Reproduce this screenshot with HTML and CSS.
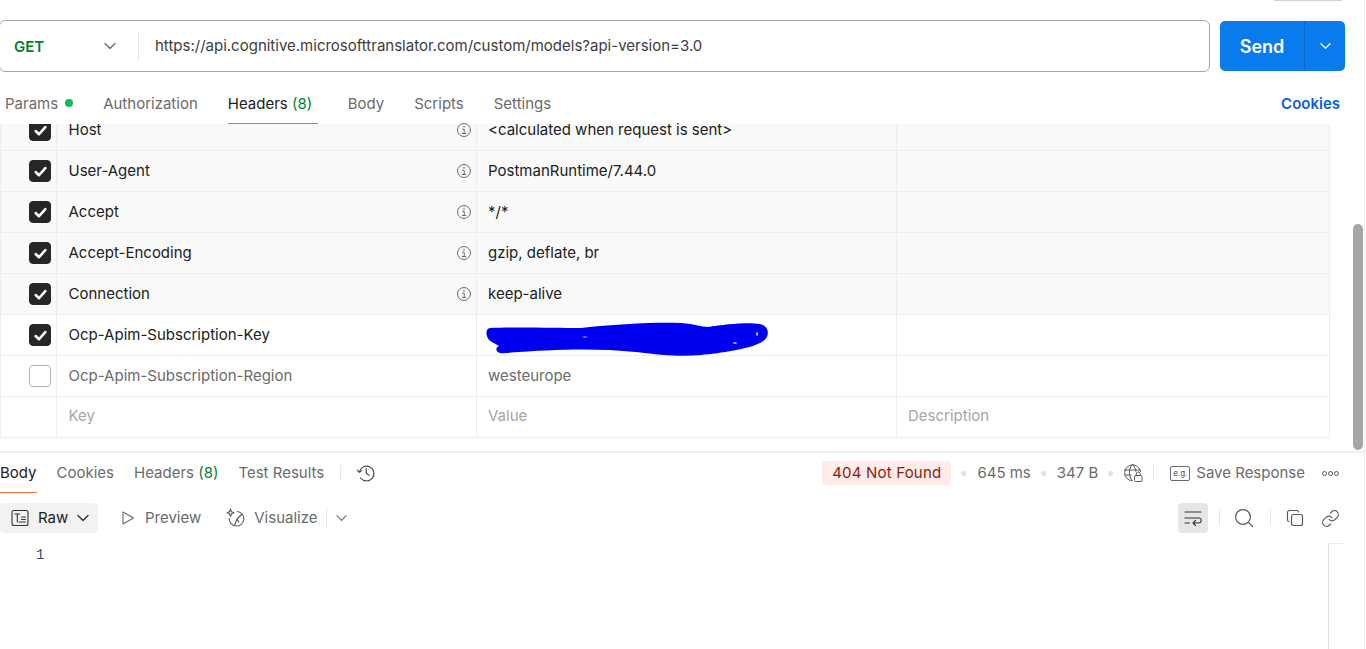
FILE: index.html
```html
<!DOCTYPE html>
<html lang="en">
<head>
<meta charset="utf-8">
<title>Postman request</title>
<link rel="stylesheet" href="styles.css">
</head>
<body>
<div class="page">
  <div class="top-strip"><span class="strip-tab"></span></div>
  <div class="url-row">
    <div class="url-box">
      <div class="method"><span class="method-name">GET</span>
        <svg class="chev-m" viewBox="0 0 12 8"><path d="M1 1.5 6 6.5 11 1.5"/></svg>
      </div>
      <div class="url-text">https://api.cognitive.microsofttranslator.com/custom/models?api-version=3.0</div>
    </div>
    <div class="send">
      <span class="send-main">Send</span>
      <span class="send-drop"><svg class="chev-w" viewBox="0 0 12 8"><path d="M1 1.5 6 6.5 11 1.5"/></svg></span>
    </div>
  </div>
  <div class="req-tabs">
    <div class="tab-list">
      <span class="tab">Params<i class="green-dot"></i></span>
      <span class="tab">Authorization</span>
      <span class="tab tab-on">Headers <b class="count">(8)</b></span>
      <span class="tab">Body</span>
      <span class="tab">Scripts</span>
      <span class="tab">Settings</span>
    </div>
    <span class="cookies">Cookies</span>
  </div>
  <div class="table-area">
    <div class="table">
      <div class="row auto first">
        <div class="c-check"><span class="box on"><svg viewBox="0 0 14 14"><path d="M2.5 7.5 5.6 10.5 11.5 3.8"/></svg></span></div>
        <div class="c-key">Host<svg class="info" viewBox="0 0 16 16"><circle cx="8" cy="8" r="6.5"/><path d="M6.6 7.2H8.2V11.5M6.4 11.5H9.8M8 4.2V5.4"/></svg></div>
        <div class="c-val">&lt;calculated when request is sent&gt;</div>
        <div class="c-desc"></div>
      </div>
      <div class="row auto">
        <div class="c-check"><span class="box on"><svg viewBox="0 0 14 14"><path d="M2.5 7.5 5.6 10.5 11.5 3.8"/></svg></span></div>
        <div class="c-key">User-Agent<svg class="info" viewBox="0 0 16 16"><circle cx="8" cy="8" r="6.5"/><path d="M6.6 7.2H8.2V11.5M6.4 11.5H9.8M8 4.2V5.4"/></svg></div>
        <div class="c-val">PostmanRuntime/7.44.0</div>
        <div class="c-desc"></div>
      </div>
      <div class="row auto">
        <div class="c-check"><span class="box on"><svg viewBox="0 0 14 14"><path d="M2.5 7.5 5.6 10.5 11.5 3.8"/></svg></span></div>
        <div class="c-key">Accept<svg class="info" viewBox="0 0 16 16"><circle cx="8" cy="8" r="6.5"/><path d="M6.6 7.2H8.2V11.5M6.4 11.5H9.8M8 4.2V5.4"/></svg></div>
        <div class="c-val">*/*</div>
        <div class="c-desc"></div>
      </div>
      <div class="row auto">
        <div class="c-check"><span class="box on"><svg viewBox="0 0 14 14"><path d="M2.5 7.5 5.6 10.5 11.5 3.8"/></svg></span></div>
        <div class="c-key">Accept-Encoding<svg class="info" viewBox="0 0 16 16"><circle cx="8" cy="8" r="6.5"/><path d="M6.6 7.2H8.2V11.5M6.4 11.5H9.8M8 4.2V5.4"/></svg></div>
        <div class="c-val">gzip, deflate, br</div>
        <div class="c-desc"></div>
      </div>
      <div class="row auto">
        <div class="c-check"><span class="box on"><svg viewBox="0 0 14 14"><path d="M2.5 7.5 5.6 10.5 11.5 3.8"/></svg></span></div>
        <div class="c-key">Connection<svg class="info" viewBox="0 0 16 16"><circle cx="8" cy="8" r="6.5"/><path d="M6.6 7.2H8.2V11.5M6.4 11.5H9.8M8 4.2V5.4"/></svg></div>
        <div class="c-val">keep-alive</div>
        <div class="c-desc"></div>
      </div>
      <div class="row">
        <div class="c-check"><span class="box on"><svg viewBox="0 0 14 14"><path d="M2.5 7.5 5.6 10.5 11.5 3.8"/></svg></span></div>
        <div class="c-key">Ocp-Apim-Subscription-Key</div>
        <div class="c-val">
          <svg class="scribble" viewBox="0 0 284 36"><path class="ink" d="M4 6C30 5 70 6 95 6C130 2 170 0 195 1C210 2 215 5 222 5C240 2 262 0 274 2C284 4 285 16 274 21C262 27 235 31 215 33C195 35 175 33 150 30C110 26 70 27 20 31C10 33 8 26 13 24L6 20C-1 17-1 6 4 6Z"/><ellipse class="hole" cx="271" cy="12" rx="0.8" ry="2"/><ellipse class="hole" cx="249" cy="21" rx="2" ry="0.8"/><ellipse class="hole" cx="99" cy="15" rx="3" ry="0.4"/></svg>
        </div>
        <div class="c-desc"></div>
      </div>
      <div class="row off">
        <div class="c-check"><span class="box"></span></div>
        <div class="c-key">Ocp-Apim-Subscription-Region</div>
        <div class="c-val">westeurope</div>
        <div class="c-desc"></div>
      </div>
      <div class="row ghost">
        <div class="c-check"></div>
        <div class="c-key">Key</div>
        <div class="c-val">Value</div>
        <div class="c-desc">Description</div>
      </div>
    </div>
    <div class="scroll-track"><span class="scroll-thumb"></span></div>
  </div>
  <div class="resp-tabs">
    <div class="resp-left">
      <span class="rtab rtab-on">Body</span>
      <span class="rtab">Cookies</span>
      <span class="rtab">Headers <b class="count">(8)</b></span>
      <span class="rtab">Test Results</span>
      <i class="vsep"></i>
      <svg class="ico-history" viewBox="0 0 20 20"><path d="M3.4 8.6A7.4 7.4 0 1 1 4.6 15M1.4 7.2 3.3 9.4 5.6 7.6M10.3 5.6V10.4L13.2 12.2"/></svg>
    </div>
    <div class="resp-right">
      <span class="status">404 Not Found</span>
      <i class="dot"></i><span class="meta num">645 ms</span>
      <i class="dot"></i><span class="meta num">347 B</span>
      <i class="dot"></i>
      <svg class="ico-globe" viewBox="0 0 20 20"><path d="M9 17.8A8 8 0 1 1 17.6 8.600M1.600 7H17M1.600 12H8M9.200 1.600C5.400 6 5.400 13 9 17.600M9.800 1.600C11.600 3.600 12.600 6 12.900 8.400"/><rect x="11.500" y="12.500" width="7.500" height="6" rx="1"/><path d="M13.200 12.500V11A2 2 0 0 1 17.200 11V12.500"/></svg>
      <i class="vsep"></i>
      <span class="eg">e.g.</span>
      <span class="meta save">Save Response</span>
      <span class="dots"><i></i><i></i><i></i></span>
    </div>
  </div>
  <div class="resp-tools">
    <div class="tools-left">
      <span class="raw">
        <svg class="ico-raw" viewBox="0 0 18 18"><rect x="1" y="1.500" width="16" height="15" rx="2"/><path d="M3.800 5H8.800M6.300 5V13M10.500 8H14.500M10.500 10.500H14.500M8.200 13H14.500"/></svg>
        <span class="lbl">Raw</span>
        <svg class="chev-d" viewBox="0 0 12 8"><path d="M1 1.500 6 6.500 11 1.500"/></svg>
      </span>
      <span class="tool"><svg class="ico-play" viewBox="0 0 14 16"><path d="M2 2V14L12.500 8Z"/></svg><span class="lbl">Preview</span></span>
      <span class="tool"><svg class="ico-viz" viewBox="0 0 20 20"><path d="M11.500 3.500A7.300 7.300 0 1 1 3.200 10.500M11 11 16 6M11 11 8.500 17.500M11 11 12.800 14"/><path d="M4.500 1 5.400 3.800 8 4.800 5.400 5.800 4.500 8.500 3.600 5.800 1 4.800 3.600 3.800Z"/></svg><span class="lbl">Visualize</span></span>
      <i class="vsep short"></i>
      <svg class="chev-g" viewBox="0 0 12 8"><path d="M1 1.500 6 6.500 11 1.500"/></svg>
    </div>
    <div class="tools-right">
      <span class="wrap-btn"><svg class="ico-wrap" viewBox="0 0 18 16"><path d="M1 2H17M1 8H15C18 8 18 13 14.500 13H9M11.500 10.500 9 13 11.500 15.500M1 13H5.500"/></svg></span>
      <i class="vsep tiny"></i>
      <svg class="ico-search" viewBox="0 0 20 20"><circle cx="9" cy="9" r="7.400"/><path d="M14.400 14.400 18.500 18.500"/></svg>
      <i class="vsep tiny"></i>
      <svg class="ico-copy" viewBox="0 0 18 18"><rect x="5.500" y="5.500" width="11" height="11" rx="2"/><path d="M3 12.500C2 12.500 1.500 12 1.500 11V3.500C1.500 2.300 2.300 1.500 3.500 1.500H11C12 1.500 12.500 2 12.500 3"/></svg>
      <svg class="ico-link" viewBox="0 0 24 24"><path d="M10 13a5 5 0 0 0 7.540.540l3-3a5 5 0 0 0-7.070-7.070l-1.720 1.710M14 11a5 5 0 0 0-7.540-.540l-3 3a5 5 0 0 0 7.070 7.070l1.710-1.710"/></svg>
    </div>
  </div>
  <div class="editor">
    <span class="line-no">1</span>
    <span class="editor-rule"></span>
  </div>
</div>
</body>
</html>
```
FILE: styles.css
```css
* { box-sizing: border-box; }
html, body { margin: 0; padding: 0; height: 100%; overflow: hidden; background: #fff; }
body { font-family: Inter, "Liberation Sans", sans-serif; font-size: 15px; color: #212121; }
svg { fill: none; stroke-linecap: round; stroke-linejoin: round; flex: none; }
i { font-style: normal; display: block; }
.page { width: 1366px; height: 649px; display: flex; flex-direction: column; overflow: hidden; position: relative; }
.page::after { content: ""; position: absolute; right: 1px; top: 0; bottom: 0; width: 1px; background: #ededed; }

.top-strip { height: 20px; position: relative; flex: none; }
.strip-tab { position: absolute; right: 24px; top: -4px; width: 68px; height: 5px; background: #fff; border-bottom: 1px solid #d0d0d0; }

.url-row { height: 52px; display: flex; padding-right: 21px; flex: none; }
.url-box { width: 1211px; height: 52px; margin-left: -1px; border: 1px solid #a6a6a6; border-radius: 6px; display: flex; align-items: center; }
.method { width: 139px; height: 31px; border-right: 1px solid #e6e6e6; display: flex; align-items: center; justify-content: space-between; padding: 0 22px 0 14px; }
.method-name { color: #007f31; font-weight: 600; font-size: 15px; }
.chev-m { width: 12px; height: 8px; stroke: #6b6b6b; stroke-width: 1.3; }
.url-text { padding-left: 16px; margin-top: -2px; font-size: 15px; color: #3d3d3d; }
.send { margin-left: 10px; width: 125px; height: 50px; margin-top: 1px; background: #097bed; border-radius: 5px; display: flex; color: #fff; }
.send-main { width: 85px; border-right: 1px solid #0e68c4; display: flex; align-items: center; justify-content: center; font-size: 18px; font-weight: 600; }
.send-drop { flex: 1; display: flex; align-items: center; justify-content: center; }
.chev-w { width: 11px; height: 8px; stroke: #fff; stroke-width: 1.3; }

.req-tabs { height: 52px; display: flex; justify-content: space-between; align-items: stretch; padding: 0 26px 0 5px; flex: none; }
.tab-list { display: flex; gap: 30px; }
.tab { display: flex; align-items: center; height: 52px; padding-top: 10px; color: #6b6b6b; position: relative; white-space: pre; }
.tab-on { color: #212121; padding-right: 5.5px; }
.tab-on::after { content: ""; position: absolute; left: 0; right: 0; bottom: 0; height: 1px; background: #f26b3a; }
.count { font-weight: 400; color: #007f31; }
.green-dot { width: 8px; height: 8px; border-radius: 50%; background: #0cbb52; margin-left: 7px; }
.cookies { color: #0c60d0; font-weight: 600; padding-top: 22px; }

.table-area { height: 327px; position: relative; flex: none; }
.table { width: 1330px; border-left: 1px solid #ededed; border-right: 1px solid #ededed; height: 314px; }
.row { height: 41px; display: flex; border-bottom: 1px solid #ededed; }
.row > div { height: 100%; display: flex; align-items: center; padding-bottom: 2px; }
.row.auto { background: #f9f9f9; }
.row.first { height: 27px; }
.row.first > div { padding-bottom: 16px; }
.row.first > .c-check { padding-bottom: 0; align-items: flex-start; overflow: hidden; }
.row.first .box { margin-top: -5px; }
.c-check { width: 56px; border-right: 1px solid #ededed; padding-left: 28px; }
.row > .c-check { padding-bottom: 0; }
.c-key { width: 420px; border-right: 1px solid #ededed; padding-left: 11.5px; padding-right: 4px; justify-content: space-between; color: #212121; }
.c-val { width: 420px; border-right: 1px solid #ededed; padding-left: 11px; color: #212121; position: relative; }
.c-desc { flex: 1; padding-left: 11px; }
.row.off .c-key, .row.off .c-val { color: #6b6b6b; }
.row.ghost .c-key, .row.ghost .c-val, .row.ghost .c-desc { color: #a6a6a6; padding-bottom: 4px; }
.box { width: 22px; height: 22px; flex: none; border-radius: 4px; border: 1px solid #b5b5b5; background: #fff; display: flex; align-items: center; justify-content: center; }
.box.on { background: #262626; border-color: #262626; }
.box svg { width: 15px; height: 15px; stroke: #fff; stroke-width: 2.4; }
.info { width: 16px; height: 16px; margin-top: 2px; stroke: #6b6b6b; stroke-width: 1; }
.scribble { position: absolute; left: 9px; top: 7px; width: 284px; height: 36px; }
.ink { fill: #0000f0; }
.hole { fill: #e8e8ff; }

.scroll-track { position: absolute; right: 0; top: 0; bottom: 0; width: 15px; }
.scroll-thumb { position: absolute; right: 3px; top: 100px; width: 10px; height: 226px; background: #a6a6a6; border-radius: 5px; }

.resp-tabs { height: 42px; border-top: 2px solid #ededed; display: flex; justify-content: space-between; align-items: center; padding-right: 27px; flex: none; }
.resp-left { display: flex; align-items: center; height: 100%; gap: 20px; }
.rtab { height: 100%; padding-bottom: 2px; display: flex; align-items: center; color: #6b6b6b; white-space: pre; position: relative; }
.rtab-on { color: #212121; }
.rtab-on::after { content: ""; position: absolute; left: 0; right: 0; bottom: 0; height: 1px; background: #f26b3a; }
.vsep { width: 1px; height: 16px; background: #e6e6e6; }
.resp-left .vsep { margin-left: -4px; }
.vsep.short { height: 18px; }
.ico-history { width: 20px; height: 20px; stroke: #4d4d4d; stroke-width: 1.2; margin-left: -5px; }
.resp-right { display: flex; align-items: center; gap: 10px; }
.status { background: #ffebe7; color: #8e1a10; border-radius: 4px; padding: 0 10px; height: 24px; line-height: 24px; letter-spacing: 0.2px; }
.dot { width: 5px; height: 5px; border-radius: 50%; background: #e0e0e0; }
.meta { color: #6b6b6b; margin-top: -2px; }
.num { margin-left: 1px; }
.ico-globe { width: 20px; height: 20px; stroke: #5a5a5a; stroke-width: 1; }
.eg { width: 20px; height: 15px; border: 1px solid #6b6b6b; border-radius: 2px; font-size: 8px; line-height: 13px; text-align: center; color: #4d4d4d; margin-left: 6px; }
.save { margin-left: -4px; }
.dots { display: flex; gap: 1px; margin-left: 7px; }
.dots i { width: 5px; height: 5px; border-radius: 50%; border: 1px solid #5a5a5a; }

.resp-tools { height: 50px; display: flex; justify-content: space-between; align-items: center; padding-right: 26px; flex: none; }
.tools-left { display: flex; align-items: center; }
.raw { width: 98px; height: 30px; background: #f2f2f2; border-radius: 4px; display: flex; align-items: center; padding-left: 11px; gap: 9px; color: #212121; }
.lbl { margin-top: -2px; }
.ico-raw { width: 18px; height: 18px; stroke: #333; stroke-width: 1.1; }
.chev-d { width: 12px; height: 8px; stroke: #333; stroke-width: 1.4; }
.tool { display: flex; align-items: center; color: #6b6b6b; gap: 10px; }
.tool:nth-child(2) { margin-left: 23px; }
.tool:nth-child(3) { margin-left: 25px; gap: 8px; }
.ico-play { width: 14px; height: 16px; stroke: #6b6b6b; stroke-width: 1.1; }
.ico-viz { width: 20px; height: 20px; stroke: #5a5a5a; stroke-width: 1.1; }
.tools-left .vsep { margin-left: 8px; }
.chev-g { width: 11px; height: 8px; stroke: #6b6b6b; stroke-width: 1.2; margin-left: 9px; }
.tools-right { display: flex; align-items: center; gap: 15px; }
.wrap-btn { width: 30px; height: 30px; margin-right: -4px; border-radius: 4px; background: #e6e6e6; display: flex; align-items: center; justify-content: center; }
.ico-wrap { width: 18px; height: 16px; stroke: #333; stroke-width: 1.1; }
.ico-search { width: 20px; height: 20px; margin: 0 1px 0 -1px; stroke: #5a5a5a; stroke-width: 1.2; }
.ico-copy { width: 18px; height: 18px; stroke: #5a5a5a; stroke-width: 1.2; }
.ico-link { width: 19px; height: 19px; margin-left: 2px; stroke: #5a5a5a; stroke-width: 1.4; }

.editor { flex: 1; position: relative; font-family: "Liberation Mono", monospace; }
.line-no { position: absolute; left: 36px; top: 4px; color: #2b4a8b; font-size: 14px; }
.editor-rule { position: absolute; left: 1328px; top: 0; bottom: 0; width: 16px; border-left: 1px solid #dcdcdc; border-top: 1px solid #ededed; }
```
